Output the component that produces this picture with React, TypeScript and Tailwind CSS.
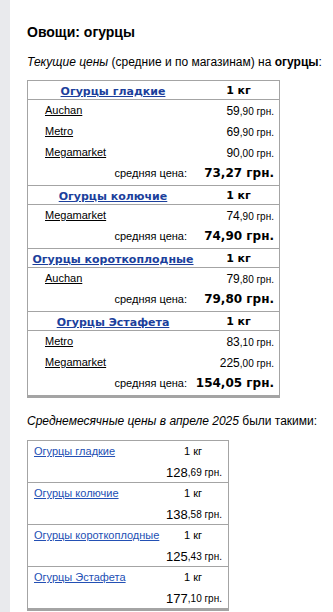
const sans = "font-['Liberation_Sans',Arial,sans-serif]";
const verd = "font-['DejaVu_Sans',Verdana,sans-serif]";

type Shop = { name: string; int: string; frac: string };
type Group = { title: string; shops: Shop[]; avg: string };

const groups: Group[] = [
  {
    title: "Огурцы гладкие",
    shops: [
      { name: "Auchan", int: "59", frac: ",90 грн." },
      { name: "Metro", int: "69", frac: ",90 грн." },
      { name: "Megamarket", int: "90", frac: ",00 грн." },
    ],
    avg: "73,27 грн.",
  },
  {
    title: "Огурцы колючие",
    shops: [{ name: "Megamarket", int: "74", frac: ",90 грн." }],
    avg: "74,90 грн.",
  },
  {
    title: "Огурцы короткоплодные",
    shops: [{ name: "Auchan", int: "79", frac: ",80 грн." }],
    avg: "79,80 грн.",
  },
  {
    title: "Огурцы Эстафета",
    shops: [
      { name: "Metro", int: "83", frac: ",10 грн." },
      { name: "Megamarket", int: "225", frac: ",00 грн." },
    ],
    avg: "154,05 грн.",
  },
];

const monthly = [
  { title: "Огурцы гладкие", int: "128", frac: ",69 грн." },
  { title: "Огурцы колючие", int: "138", frac: ",58 грн." },
  { title: "Огурцы короткоплодные", int: "125", frac: ",43 грн." },
  { title: "Огурцы Эстафета", int: "177", frac: ",10 грн." },
];

export default function App() {
  return (
    <div className={`flex min-h-[612px] bg-white text-black ${sans}`}>
      <div className="w-[10px] shrink-0 bg-[#e9eaed]" />
      <main className="flex-1 pl-[17px] pt-[24px]">
        <h1 className="text-[14px] leading-[16px] font-bold">Овощи: огурцы</h1>

        <p className="mt-[14px] text-[12px] leading-[16px] whitespace-nowrap">
          <i>Текущие цены</i> (средние и по магазинам) на <b>огурцы</b>:
        </p>

        <div className="mt-[10px] w-[253px] border border-b-[3px] border-[#a4a4a4]">
          {groups.map((g, gi) => (
            <div key={gi} className={gi > 0 ? "border-t border-[#a4a4a4]" : ""}>
              <div className="flex h-[19px] items-center border-b border-[#a4a4a4] leading-[19px]">
                <div className="w-[170px] text-center">
                  <a className={`${verd} text-[11px] font-bold text-[#1c3f9c] underline`}>{g.title}</a>
                </div>
                <div className={`flex-1 text-center ${verd} text-[11px] font-bold`}>1 кг</div>
              </div>
              {g.shops.map((s, si) => (
                <div key={si} className="flex h-[21px] items-center pl-[17px] pr-[5px] leading-[21px]">
                  <a className="text-[11px] underline">{s.name}</a>
                  <span className="ml-auto whitespace-nowrap">
                    <span className="text-[12px]">{s.int}</span>
                    <span className="text-[10px]">{s.frac}</span>
                  </span>
                </div>
              ))}
              <div className="flex h-[22px] items-start pr-[5px] leading-[21px]">
                <div className="w-[159px] text-right text-[11px]">средняя цена:</div>
                <div className={`ml-auto ${verd} text-[12px] font-bold whitespace-nowrap`}>{g.avg}</div>
              </div>
            </div>
          ))}
        </div>

        <p className="mt-[15px] text-[12px] leading-[16px] whitespace-nowrap">
          <i>Среднемесячные цены в апреле 2025</i> были такими:
        </p>

        <div className="mt-[11px] w-[202px] border border-b-[3px] border-[#a4a4a4]">
          {monthly.map((m, i) => (
            <div key={i} className={`px-[6px] ${i > 0 ? "border-t border-[#a4a4a4]" : ""}`}>
              <div className="flex h-[20px] items-center leading-[20px]">
                <a className="w-[130px] text-[11px] text-[#2350b4] underline whitespace-nowrap">{m.title}</a>
                <span className="flex-1 text-center text-[11px]">1 кг</span>
              </div>
              <div className="flex h-[21px] items-start justify-end whitespace-nowrap pt-[2px] leading-[20px]">
                <span className="text-[13px]">{m.int}</span>
                <span className="text-[10px]">{m.frac}</span>
              </div>
            </div>
          ))}
        </div>
      </main>
    </div>
  );
}
